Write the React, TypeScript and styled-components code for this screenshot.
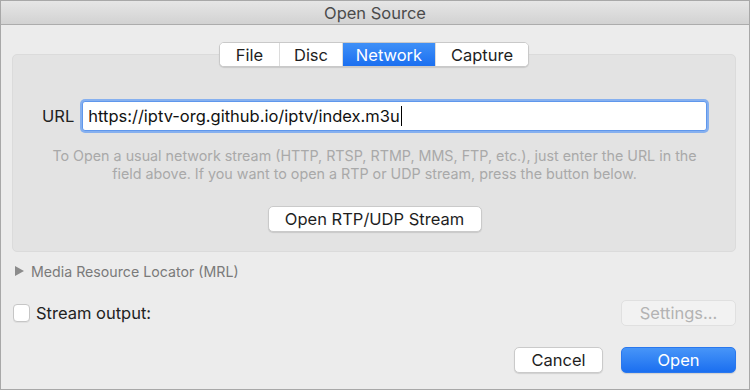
import React from 'react'
import styled, { createGlobalStyle } from 'styled-components'

const GlobalStyle = createGlobalStyle`
  html, body {
    margin: 0;
    padding: 0;
    background: #ececec;
  }
  * {
    box-sizing: border-box;
  }
  body {
    font-family: Inter, "Noto Sans", "Liberation Sans", sans-serif;
    color: #222;
  }
`

const Window = styled.div`
  width: 750px;
  height: 390px;
  display: flex;
  flex-direction: column;
  border: 1px solid #a8a8a8;
  background: #ececec;
`

const TitleBar = styled.div`
  height: 24px;
  flex: none;
  display: flex;
  align-items: center;
  justify-content: center;
  background: linear-gradient(#e6e6e6, #d2d2d2);
  border-bottom: 1px solid #acacac;
  font-size: 16.5px;
  color: #4b4b4b;
`

const Content = styled.div`
  flex: 1;
  display: flex;
  flex-direction: column;
  padding: 17px 13px 0 11px;
`

const TabBar = styled.div`
  position: relative;
  z-index: 1;
  align-self: center;
  display: flex;
  height: 25px;
  margin-bottom: -13px;
  border: 1px solid #c9c9c9;
  border-radius: 5px;
  background: #fff;
  box-shadow: 0 1px 1px rgba(0, 0, 0, 0.12);
  overflow: hidden;
`

const Tab = styled.div<{ $active?: boolean; $w: number }>`
  width: ${(p) => p.$w}px;
  display: flex;
  align-items: center;
  justify-content: center;
  font-size: 16.5px;
  color: ${(p) => (p.$active ? '#fff' : '#1e1e1e')};
  background: ${(p) => (p.$active ? 'linear-gradient(#3f90f7, #1b6ff0)' : '#fff')};
  & + & {
    border-left: 1px solid #dcdcdc;
  }
`

const GroupBox = styled.div`
  height: 198px;
  flex: none;
  display: flex;
  flex-direction: column;
  align-items: stretch;
  padding: 46px 28px 0 29px;
  background: #e3e3e3;
  border: 1px solid #dbdbdb;
  border-radius: 5px;
`

const UrlRow = styled.div`
  display: flex;
  align-items: center;
  justify-content: flex-end;
  gap: 8px;
`

const Label = styled.span`
  font-size: 16.5px;
  color: #222;
`

const UrlField = styled.div`
  width: 626px;
  height: 30px;
  display: flex;
  align-items: center;
  padding-left: 5px;
  background: #fff;
  border: 1px solid #5f97ec;
  border-radius: 3px;
  box-shadow: 0 0 0 2px #86b0ef;
  font-size: 16.5px;
  color: #111;
`

const Caret = styled.span`
  display: inline-block;
  width: 1px;
  height: 20px;
  background: #000;
  margin-left: 1px;
`

const HelpText = styled.div`
  margin-top: 16px;
  text-align: center;
  font-size: 14.3px;
  line-height: 18px;
  color: #a9a9a9;
  span {
    display: block;
    white-space: nowrap;
  }
`

const PushButton = styled.div<{ $w: number; $primary?: boolean; $disabled?: boolean }>`
  width: ${(p) => p.$w}px;
  height: 26px;
  flex: none;
  display: flex;
  align-items: center;
  justify-content: center;
  border-radius: 5px;
  font-size: 16.5px;
  color: ${(p) => (p.$primary ? '#fff' : p.$disabled ? '#b3b3b3' : '#1e1e1e')};
  background: ${(p) =>
    p.$primary ? 'linear-gradient(#4795f8, #1b6ff0)' : p.$disabled ? '#f2f2f2' : '#fff'};
  border: 1px solid
    ${(p) => (p.$primary ? '#2a78ee' : p.$disabled ? '#e0e0e0' : '#cacaca')};
  box-shadow: ${(p) => (p.$disabled ? 'none' : '0 1px 1px rgba(0, 0, 0, 0.12)')};
`

const CenterRow = styled.div`
  display: flex;
  justify-content: center;
  margin-top: 23px;
`

const Disclosure = styled.div`
  height: 18px;
  margin-top: 10px;
  margin-left: 3px;
  display: flex;
  align-items: center;
  gap: 7px;
  font-size: 14.2px;
  color: #7a7a7a;
`

const Triangle = styled.span`
  width: 0;
  height: 0;
  border-top: 5px solid transparent;
  border-bottom: 5px solid transparent;
  border-left: 9px solid #8c8c8c;
`

const OutputRow = styled.div`
  margin-top: 20px;
  height: 26px;
  display: flex;
  align-items: center;
  justify-content: space-between;
`

const CheckLabel = styled.label`
  display: flex;
  align-items: center;
  gap: 6px;
  margin-left: 1px;
  font-size: 16.5px;
  color: #222;
`

const CheckBox = styled.span`
  width: 17px;
  height: 18px;
  background: #fff;
  border: 1px solid #c6c6c6;
  border-radius: 4px;
  box-shadow: 0 1px 0 rgba(0, 0, 0, 0.05);
`

const ActionRow = styled.div`
  margin-top: 21px;
  display: flex;
  justify-content: flex-end;
  gap: 18px;
`

export default function App() {
  return (
    <>
      <GlobalStyle />
      <Window>
        <TitleBar>Open Source</TitleBar>
        <Content>
          <TabBar>
            <Tab $w={59}>File</Tab>
            <Tab $w={63}>Disc</Tab>
            <Tab $w={93} $active>Network</Tab>
            <Tab $w={93}>Capture</Tab>
          </TabBar>
          <GroupBox>
            <UrlRow>
              <Label>URL</Label>
              <UrlField>
                https://iptv-org.github.io/iptv/index.m3u
                <Caret />
              </UrlField>
            </UrlRow>
            <HelpText>
              <span>
                To Open a usual network stream (HTTP, RTSP, RTMP, MMS, FTP, etc.), just enter the URL in the
              </span>
              <span>field above. If you want to open a RTP or UDP stream, press the button below.</span>
            </HelpText>
            <CenterRow>
              <PushButton $w={214}>Open RTP/UDP Stream</PushButton>
            </CenterRow>
          </GroupBox>
          <Disclosure>
            <Triangle />
            Media Resource Locator (MRL)
          </Disclosure>
          <OutputRow>
            <CheckLabel>
              <CheckBox />
              Stream output:
            </CheckLabel>
            <PushButton $w={115} $disabled>
              Settings...
            </PushButton>
          </OutputRow>
          <ActionRow>
            <PushButton $w={89}>Cancel</PushButton>
            <PushButton $w={115} $primary>
              Open
            </PushButton>
          </ActionRow>
        </Content>
      </Window>
    </>
  )
}
